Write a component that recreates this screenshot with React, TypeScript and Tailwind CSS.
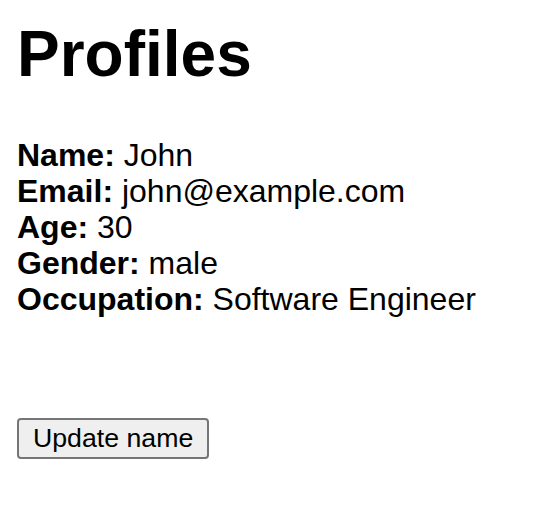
import React from "react";

type Field = { label: string; value: string };

const fields: Field[] = [
  { label: "Name", value: "John" },
  { label: "Email", value: "john@example.com" },
  { label: "Age", value: "30" },
  { label: "Gender", value: "male" },
  { label: "Occupation", value: "Software Engineer" },
];

export default function App() {
  const [name, setName] = React.useState("John");

  return (
    <div className="min-h-[516px] bg-white pl-[17px] pt-[17px] text-black font-['Liberation_Sans',Arial,sans-serif]">
      <h1 className="text-[64px] font-bold leading-[74px]">Profiles</h1>
      <div className="mt-[46px] text-[32px] leading-[36px]">
        {fields.map((f) => (
          <div key={f.label}>
            <span className="font-bold">{f.label}:</span>{" "}
            {f.label === "Name" ? name : f.value}
          </div>
        ))}
      </div>
      <button
        className="mt-[101px] rounded-[4px] border-2 border-[#767676] bg-[#efefef] px-[14px] py-[3px] text-[26.7px] leading-[31px] text-black"
        onClick={() => setName(name)}
      >
        Update name
      </button>
    </div>
  );
}
